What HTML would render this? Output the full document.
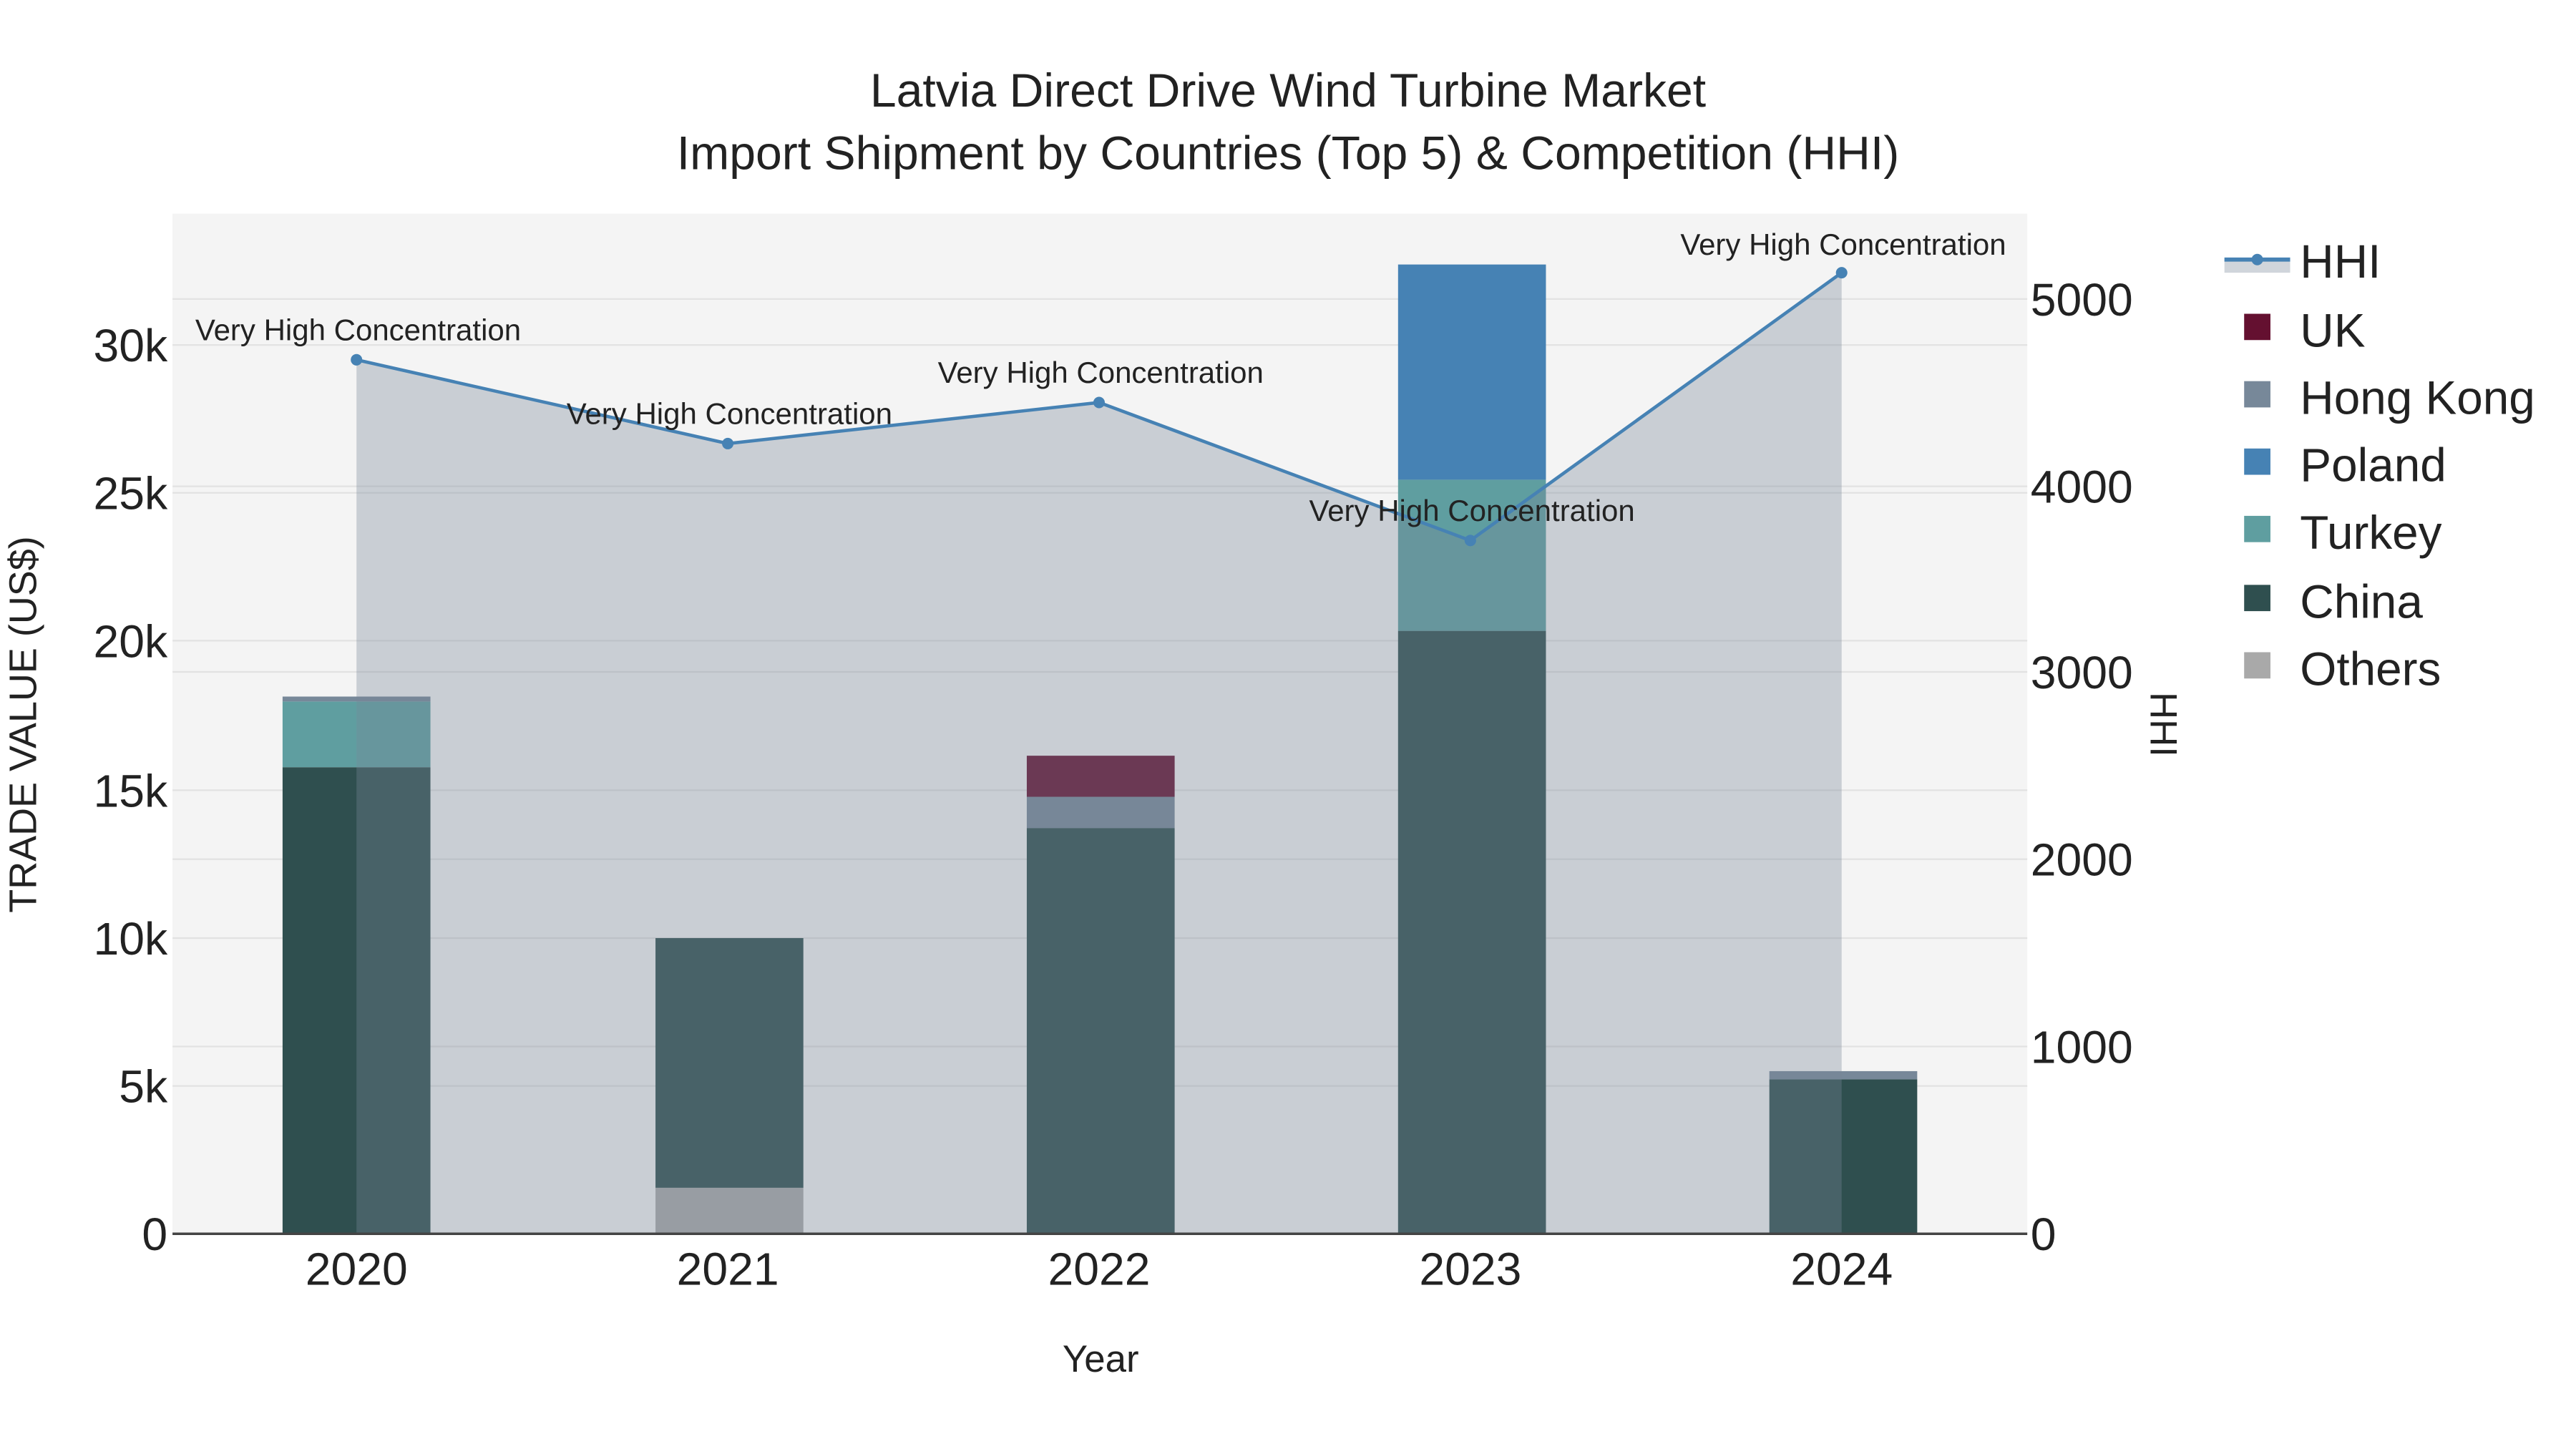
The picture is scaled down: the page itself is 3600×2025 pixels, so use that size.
<!DOCTYPE html>
<html><head><meta charset="utf-8"><style>
html,body{margin:0;padding:0;background:#fff;}
svg{display:block;}
text{font-family:"Liberation Sans",sans-serif;fill:#222;}
</style></head><body>
<svg width="3600" height="2025" viewBox="0 0 1568 882" xmlns="http://www.w3.org/2000/svg">
<rect width="1568" height="882" fill="#fff"/>
<rect x="105" y="130" width="1129" height="621" fill="#f4f4f4"/>
<g stroke="#e2e2e2" stroke-width="1">
<line x1="105" x2="1234" y1="661" y2="661"/><line x1="105" x2="1234" y1="571" y2="571"/>
<line x1="105" x2="1234" y1="481" y2="481"/><line x1="105" x2="1234" y1="390" y2="390"/>
<line x1="105" x2="1234" y1="300" y2="300"/><line x1="105" x2="1234" y1="210" y2="210"/>
<line x1="105" x2="1234" y1="637" y2="637"/><line x1="105" x2="1234" y1="523" y2="523"/>
<line x1="105" x2="1234" y1="409" y2="409"/><line x1="105" x2="1234" y1="296" y2="296"/>
<line x1="105" x2="1234" y1="182" y2="182"/>
</g>
<rect x="172" y="467" width="90" height="284" fill="#2f4f4f"/>
<rect x="172" y="427" width="90" height="40" fill="#5f9ea0"/>
<rect x="172" y="424" width="90" height="3" fill="#778899"/>
<rect x="399" y="571" width="90" height="152" fill="#2f4f4f"/>
<rect x="399" y="723" width="90" height="28" fill="#a9a9a9"/>
<rect x="625" y="504" width="90" height="247" fill="#2f4f4f"/>
<rect x="625" y="485" width="90" height="19" fill="#778899"/>
<rect x="625" y="460" width="90" height="25" fill="#641030"/>
<rect x="851" y="384" width="90" height="367" fill="#2f4f4f"/>
<rect x="851" y="292" width="90" height="92" fill="#5f9ea0"/>
<rect x="851" y="161" width="90" height="131" fill="#4682b4"/>
<rect x="1077" y="657" width="90" height="94" fill="#2f4f4f"/>
<rect x="1077" y="652" width="90" height="5" fill="#778899"/>
<polygon points="217,751 217,219 443,270 669,245 895,329 1121,166 1121,751" fill="#778899" fill-opacity="0.35"/>
<polyline points="217,219 443,270 669,245 895,329 1121,166" fill="none" stroke="#4682b4" stroke-width="2"/>
<g fill="#4682b4"><circle cx="217" cy="219" r="3.5"/><circle cx="443" cy="270" r="3.5"/><circle cx="669" cy="245" r="3.5"/><circle cx="895" cy="329" r="3.5"/><circle cx="1121" cy="166" r="3.5"/></g>
<line x1="105" x2="1234" y1="751" y2="751" stroke="#444" stroke-width="1.5"/>
<g font-size="18.3" text-anchor="middle">
<text x="218" y="207">Very High Concentration</text>
<text x="444" y="258">Very High Concentration</text>
<text x="670" y="233">Very High Concentration</text>
<text x="896" y="317">Very High Concentration</text>
<text x="1122" y="155">Very High Concentration</text>
</g>
<g font-size="28.8" text-anchor="middle">
<text x="784" y="65">Latvia Direct Drive Wind Turbine Market</text>
<text x="784" y="103">Import Shipment by Countries (Top 5) &amp; Competition (HHI)</text>
</g>
<g font-size="28" text-anchor="end">
<text x="102" y="761">0</text><text x="102" y="671">5k</text><text x="102" y="581">10k</text>
<text x="102" y="491">15k</text><text x="102" y="400">20k</text><text x="102" y="310">25k</text><text x="102" y="220">30k</text>
</g>
<g font-size="28" text-anchor="start">
<text x="1236" y="761">0</text><text x="1236" y="647">1000</text><text x="1236" y="533">2000</text>
<text x="1236" y="419">3000</text><text x="1236" y="306">4000</text><text x="1236" y="192">5000</text>
</g>
<g font-size="28" text-anchor="middle">
<text x="217" y="782">2020</text><text x="443" y="782">2021</text><text x="669" y="782">2022</text>
<text x="895" y="782">2023</text><text x="1121" y="782">2024</text>
</g>
<text x="670" y="835" font-size="23" text-anchor="middle">Year</text>
<text transform="translate(22,441) rotate(-90)" font-size="23.5" text-anchor="middle">TRADE VALUE (US$)</text>
<text transform="translate(1309,441) rotate(90)" font-size="23" text-anchor="middle">HHI</text>
<rect x="1354" y="158" width="40" height="8" fill="#778899" fill-opacity="0.35"/>
<line x1="1354" x2="1394" y1="158" y2="158" stroke="#4682b4" stroke-width="2.5"/>
<circle cx="1374" cy="158" r="3.5" fill="#4682b4"/>
<rect x="1366" y="191" width="16" height="16" fill="#641030"/>
<rect x="1366" y="232" width="16" height="16" fill="#778899"/>
<rect x="1366" y="273" width="16" height="16" fill="#4682b4"/>
<rect x="1366" y="314" width="16" height="16" fill="#5f9ea0"/>
<rect x="1366" y="356" width="16" height="16" fill="#2f4f4f"/>
<rect x="1366" y="397" width="16" height="16" fill="#a9a9a9"/>
<g font-size="28.6">
<text x="1400" y="169">HHI</text><text x="1400" y="211">UK</text><text x="1400" y="252">Hong Kong</text>
<text x="1400" y="293">Poland</text><text x="1400" y="334">Turkey</text><text x="1400" y="376">China</text><text x="1400" y="417">Others</text>
</g>
</svg>
</body></html>
